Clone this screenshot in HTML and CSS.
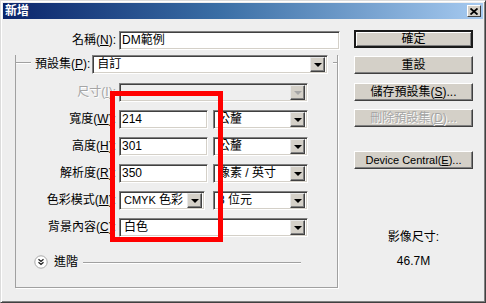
FILE: index.html
```html
<!DOCTYPE html>
<html lang="zh-Hant">
<head>
  <meta charset="UTF-8">
  <title>新增</title>
  <link rel="stylesheet" href="styles.css">
</head>
<body>
  <div class="dialog">
    <div class="titlebar">
      <span class="title">新增</span>
      <span class="close">
        <svg width="8" height="7" viewBox="0 0 8 7"><path d="M0.5 0.5 L7.5 6.5 M7.5 0.5 L0.5 6.5" stroke="#000" stroke-width="1.8"/></svg>
      </span>
    </div>
    <div class="content">
      <div class="main">
        <div class="field">
          <label class="lbl">名稱(<u>N</u>):</label>
          <div class="input name">DM範例</div>
        </div>
        <!-- 預設集 群組 -->
        <div class="group">
          <div class="group-head">
            <span class="seg seg-left"></span>
            <label class="head-lbl">預設集(<u>P</u>):</label>
            <div class="select preset"><span>自訂</span><i class="arrow"></i></div>
            <span class="seg seg-right"></span>
          </div>
          <div class="field first">
            <label class="lbl in disabled">尺寸(<u>I</u>):</label>
            <div class="select full off"><span></span><i class="arrow"></i></div>
          </div>
          <div class="field">
            <label class="lbl in">寬度(<u>W</u>):</label>
            <div class="input num">214</div>
            <div class="select unit"><span>公釐</span><i class="arrow"></i></div>
          </div>
          <div class="field">
            <label class="lbl in">高度(<u>H</u>):</label>
            <div class="input num">301</div>
            <div class="select unit"><span>公釐</span><i class="arrow"></i></div>
          </div>
          <div class="field">
            <label class="lbl in">解析度(<u>R</u>):</label>
            <div class="input num">350</div>
            <div class="select unit"><span>像素 / 英寸</span><i class="arrow"></i></div>
          </div>
          <div class="field">
            <label class="lbl in">色彩模式(<u>M</u>):</label>
            <div class="select mode"><span><small>CMYK</small> 色彩</span><i class="arrow"></i></div>
            <div class="select unit"><span>8 位元</span><i class="arrow"></i></div>
          </div>
          <div class="field">
            <label class="lbl in">背景內容(<u>C</u>):</label>
            <div class="select full"><span>白色</span><i class="arrow"></i></div>
          </div>
          <div class="advanced">
            <svg class="adv-icon" width="14" height="14" viewBox="0 0 14 14">
              <circle cx="7" cy="7" r="6.2" fill="#fff" stroke="#a8a8a8"/>
              <path d="M4.5 4.3 L7 6.5 L9.5 4.3 M4.5 7.3 L7 9.5 L9.5 7.3" fill="none" stroke="#222" stroke-width="1.3"/>
            </svg>
            <span class="adv-text">進階</span>
            <span class="adv-line"></span>
          </div>
        </div>
      </div>
      <div class="side">
        <button class="btn default">確定</button>
        <button class="btn">重設</button>
        <button class="btn save">儲存預設集(<u>S</u>)...</button>
        <button class="btn off-btn">刪除預設集(<u>D</u>)...</button>
        <button class="btn device">Device Central(<u>E</u>)...</button>
        <div class="size-lbl">影像尺寸:</div>
        <div class="size-val">46.7M</div>
      </div>
    </div>
    <div class="highlight"></div>
  </div>
</body>
</html>
```

FILE: styles.css
```css
* { box-sizing: border-box; margin: 0; padding: 0; }
body { font-family: "Liberation Sans", "Noto Sans CJK TC", sans-serif; font-size: 12px; line-height: 17px; color: #000; background: #fff; }
u { text-decoration: underline; }
small { font-size: 11px; }

.dialog { position: relative; width: 486px; height: 303px; background: #eeeeee; border: 1px solid; border-color: #dcdcdc #404040 #404040 #dcdcdc; box-shadow: inset 1px 1px 0 #fff, inset -1px -1px 0 #808080; padding: 2px; }
.titlebar { height: 16px; display: flex; align-items: center; justify-content: space-between; padding: 0 2px; background: linear-gradient(90deg, #0a246a 0%, #3a6ea5 45%, #a6caf0 100%); }
.title { color: #fff; font-weight: bold; font-size: 12px; line-height: 16px; }
.close { width: 14px; height: 12px; display: flex; align-items: center; justify-content: center; background: #d4d0c8; border: 1px solid; border-color: #fff #404040 #404040 #fff; }

.content { display: flex; padding-top: 12px; }
.main { width: 337px; }
.side { width: 119px; margin-left: 14px; margin-top: -1px; display: flex; flex-direction: column; align-items: stretch; }

/* campos */
.field { display: flex; align-items: center; height: 19px; margin-top: 8px; }
.field:first-child { margin-top: 0; }
.field.first { margin-top: 9px; }
.lbl { width: 113px; text-align: right; margin-right: 3px; white-space: nowrap; }
.lbl.in { width: 100px; }
.disabled { color: #a5a5a5; text-shadow: 1px 1px 0 #fff; }

.input, .select { height: 19px; background: #fff; border: 1px solid; border-color: #808080 #fff #fff #808080; box-shadow: inset 1px 1px 0 #404040, inset -1px -1px 0 #d4d0c8; line-height: 17px; white-space: nowrap; overflow: hidden; }
.input { padding-left: 2px; }
.input.name { width: 221px; }
.input.num { width: 89px; }
.select { display: flex; align-items: center; padding: 0 2px 0 4px; }
.select span { flex: 1; }
.select.preset { width: 236px; margin-left: 2px; }
.select.full { width: 189px; }
.select.unit { width: 95px; margin-left: 5px; }
.select.mode { width: 86px; margin-right: 3px; }
.select.mode + .unit { margin-left: 5px; }
.select.off { background: #eeeeee; }
.arrow { width: 15px; height: 15px; flex: none; display: flex; align-items: center; justify-content: center; background: #d4d0c8; border: 1px solid; border-color: #e8e8e8 #404040 #404040 #e8e8e8; box-shadow: inset -1px -1px 0 #808080; }
.arrow::after { content: ""; border-top: 4px solid #000; border-left: 4px solid transparent; border-right: 4px solid transparent; margin-top: 1px; }
.select.off .arrow::after { border-top-color: #a5a5a5; }

/* grupo */
.group { margin: 12px 0 0 12px; width: 323px; border: 1px solid #a0a0a0; border-top: none; box-shadow: 1px 1px 0 #fff; padding-bottom: 18px; }
.group-head { display: flex; align-items: flex-start; margin-top: -7px; height: 19px; }
.seg { height: 0; margin-top: 7px; border-top: 1px solid #a0a0a0; box-shadow: 0 1px 0 #fff; }
.seg-left { width: 15px; margin-right: 4px; }
.seg-right { flex: 1; margin-left: 5px; }
.head-lbl { white-space: nowrap; line-height: 19px; }

.advanced { display: flex; align-items: center; height: 14px; margin-top: 18px; padding-left: 18px; }
.adv-icon { flex: none; }
.adv-text { margin-left: 6px; }
.adv-line { width: 218px; margin-left: 5px; border-top: 1px solid #a0a0a0; box-shadow: 0 1px 0 #fff; }

/* botoes */
.btn { height: 18px; font: inherit; font-size: 12px; line-height: 14px; background: #d4d0c8; border: 1px solid; border-color: #fff #404040 #404040 #fff; box-shadow: inset -1px -1px 0 #808080; color: #000; white-space: nowrap; }
.btn.default { border: 2px solid #1a1a1a; box-shadow: inset 1px 1px 0 #fff, inset -1px -1px 0 #808080; margin-bottom: 8px; }
.btn:nth-child(2) { margin-bottom: 9px; }
.btn.save { margin-bottom: 8px; }
.btn.off-btn { margin-bottom: 24px; color: #a5a5a5; text-shadow: 1px 1px 0 #fff; }
.btn.device { font-size: 11px; }
.size-lbl { margin-top: 60px; text-align: center; }
.size-val { margin-top: 7px; text-align: center; }

/* marcacao vermelha por cima */
.highlight { position: absolute; left: 109px; top: 90px; width: 113px; height: 151px; border: 5px solid #ff0000; }
```
